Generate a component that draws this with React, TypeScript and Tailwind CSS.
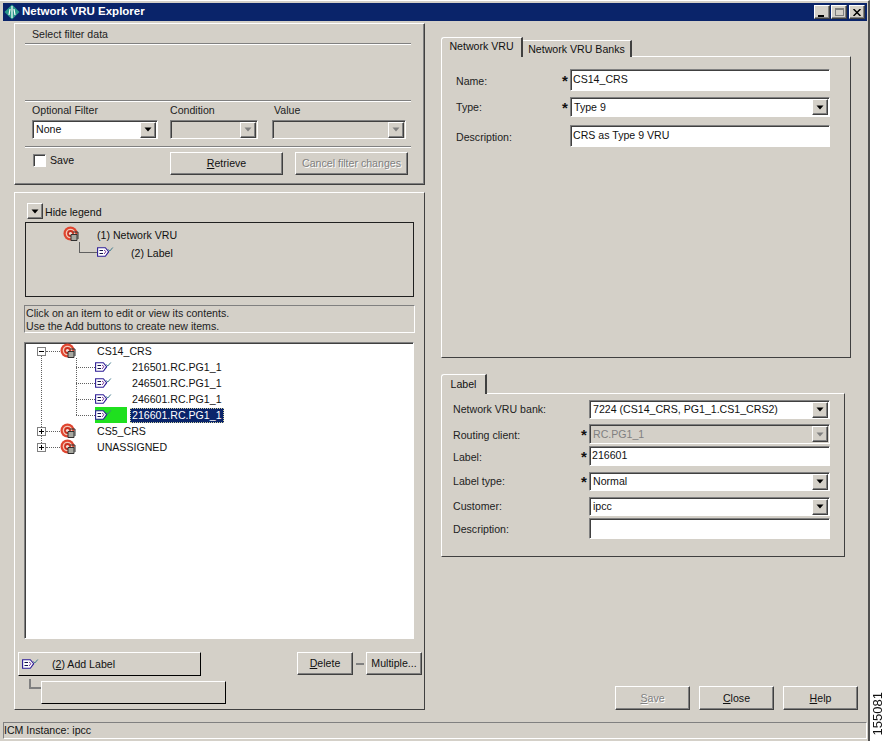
import type { ReactNode } from "react";

const raised = "border border-t-white border-l-white border-r-[#404040] border-b-[#404040] shadow-[inset_-1px_-1px_0_#808080]";
const sunken = "border border-t-[#808080] border-l-[#808080] border-r-white border-b-white shadow-[inset_1px_1px_0_#404040]";
const panel = "border border-t-white border-l-white border-r-[#404040] border-b-[#404040]";

function NetIcon() {
  return (
    <svg width="16" height="16" viewBox="0 0 16 16" className="shrink-0">
      <circle cx="7.5" cy="7.5" r="7" fill="#e0452f" />
      <circle cx="7.5" cy="7.5" r="4.8" fill="#f5c8b8" />
      <circle cx="7.5" cy="7.5" r="3.4" fill="#c9301f" />
      <circle cx="7.5" cy="7.5" r="1.6" fill="#f6e0d8" />
      <path d="M8 8.5h6v6H8z" fill="#a8a8a0" stroke="#303030" strokeWidth="1" />
      <path d="M10 6h5v7" fill="none" stroke="#303030" strokeWidth="1" />
    </svg>
  );
}

function LabelIcon() {
  return (
    <svg width="17" height="12" viewBox="0 0 17 12" className="shrink-0">
      <path d="M0.6 1.7h7.7l3.4 4-3.4 4.6H0.6z" fill="#fff" stroke="#2c1c96" strokeWidth="1.1" />
      <path d="M2.5 4.5h3.5M2.5 7.5h3.5" stroke="#14144c" strokeWidth="1" />
      <path d="M7 4l2 1.6L7 8" fill="none" stroke="#7a3a9a" strokeWidth="1" />
      <path d="M11.5 3.5l1.3 1.5 3-3.5" fill="none" stroke="#3f7a8c" strokeWidth="1" />
    </svg>
  );
}

function Arrow({ off }: { off?: boolean }) {
  return (
    <svg width="8" height="5" viewBox="0 0 8 5">
      <path d="M0.5 0.5h7L4 4.5z" fill={off ? "#808080" : "#000"} />
    </svg>
  );
}

function Etched({ className }: { className: string }) {
  return <div className={`h-[2px] ml-[10px] w-[386px] border-t border-t-[#808080] border-b border-b-white ${className}`} />;
}

function Select({ value, off, className }: { value?: string; off?: boolean; className: string }) {
  return (
    <div className={`${sunken} flex items-center justify-between pl-[3px] pr-[1px] ${off ? "bg-[#d4d0c8] text-[#808080]" : "bg-white"} ${className}`}>
      <span className="whitespace-nowrap">{value}</span>
      <span className={`${raised} bg-[#d4d0c8] w-[16px] h-[16px] flex items-center justify-center shrink-0`}>
        <Arrow off={off} />
      </span>
    </div>
  );
}

function Input({ value, className }: { value?: string; className: string }) {
  return <div className={`${sunken} bg-white flex items-center pl-[2px] pb-[2px] ${className}`}>{value}</div>;
}

function Btn({ children, off, className }: { children?: ReactNode; off?: boolean; className: string }) {
  return (
    <div className={`${raised} bg-[#d4d0c8] flex items-center justify-center shrink-0 ${off ? "text-[#808080] [text-shadow:1px_1px_0_#fff]" : ""} ${className}`}>
      {children}
    </div>
  );
}

function Field({ label, star, labelW, left, mt, children }: { label: string; star?: boolean; labelW: string; left: string; mt: string; children: ReactNode }) {
  return (
    <div className={`flex items-center ${mt}`}>
      <span className={`${left} ${labelW} text-[#222]`}>{label}</span>
      <span className="w-[8px] text-[15px] font-bold leading-none">{star ? "*" : ""}</span>
      {children}
    </div>
  );
}

function Hline({ w }: { w: string }) {
  return <span className={`${w} shrink-0 border-t border-dotted border-[#606060]`} />;
}

function Parent({ name, open }: { name: string; open?: boolean }) {
  return (
    <div className="flex items-center h-[16px] pl-[12px] relative">
      <span className="w-[9px] h-[9px] border border-[#808080] bg-white flex items-center justify-center relative shrink-0">
        <span className="w-[5px] h-px bg-black" />
        {!open && <span className="absolute w-px h-[5px] bg-black" />}
      </span>
      <Hline w="w-[14px]" />
      <span className="w-[37px] shrink-0"><NetIcon /></span>
      <span>{name}</span>
    </div>
  );
}

function Child({ name, selected }: { name: string; selected?: boolean }) {
  return (
    <div className="flex items-center h-[16px] pl-[51px]">
      <Hline w="w-[19px]" />
      <span className={`w-[32px] h-[16px] shrink-0 flex items-center ${selected ? "bg-[#1fe01f]" : ""}`}><LabelIcon /></span>
      {selected ? (
        <span className="ml-[3px] px-[2px] h-[15px] flex items-center bg-[#0a246a] text-white outline-1 outline-dotted outline-[#d0d0a0] -outline-offset-1">{name}</span>
      ) : (
        <span className="ml-[5px]">{name}</span>
      )}
    </div>
  );
}

function WinBtn({ children }: { children: ReactNode }) {
  return <span className={`${raised} bg-[#d4d0c8] w-[16px] h-[14px] flex items-center justify-center`}>{children}</span>;
}

export default function App() {
  return (
    <div className="w-[885px] h-[742px] flex bg-white overflow-hidden text-[10.6px] leading-none text-[#111] [font-family:'Liberation_Sans',sans-serif]">
      <div className="w-[870px] h-[741px] shrink-0 bg-[#d4d0c8] flex flex-col pl-[3px] pt-[3px] pr-px border-r-2 border-r-[#505050] border-t border-t-white">
        {/* title bar */}
        <div className="h-[18px] -mt-px shrink-0 bg-[#0a246a] flex items-center justify-between text-white font-bold text-[11.5px] pr-[2px]">
          <div className="flex items-center gap-[2px] pl-[1px]">
            <svg width="16" height="16" viewBox="0 0 16 16">
              <path d="M8 0.5L15.5 8 8 15.5 0.5 8z" fill="#2a9a8a" />
              <path d="M8 2v12M5 11l1-6M11 11l-1-6" stroke="#fff" strokeWidth="1.2" fill="none" />
            </svg>
            <span>Network VRU Explorer</span>
          </div>
          <div className="flex text-black">
            <WinBtn><span className="w-[6px] h-[2px] bg-black mt-[7px] -ml-[2px]" /></WinBtn>
            <span className="ml-[1px]"><WinBtn><span className="w-[9px] h-[8px] border border-t-2 border-[#808080]" /></WinBtn></span>
            <span className="ml-[2px]">
              <WinBtn>
                <svg width="8" height="7" viewBox="0 0 8 7"><path d="M0.5 0l7 7M7.5 0l-7 7" stroke="#000" strokeWidth="1.5" /></svg>
              </WinBtn>
            </span>
          </div>
        </div>

        <div className="flex flex-1 min-h-0">
          {/* left column */}
          <div className="ml-[11px] w-[411px] shrink-0">
            <div className={`${panel} mt-[2px] h-[162px] shadow-[inset_-1px_-1px_0_#808080]`}>
              <div className="mt-[3px] ml-[17px] h-[14px] flex items-center text-[#222]">Select filter data</div>
              <Etched className="mt-[2px]" />
              <Etched className="mt-[55px]" />
              <div className="flex mt-px h-[14px] items-center ml-[17px] text-[#222]">
                <span className="w-[138px]">Optional Filter</span>
                <span className="w-[104px]">Condition</span>
                <span>Value</span>
              </div>
              <div className="flex mt-[3px] ml-[17px] gap-[12px]">
                <Select value="None" className="w-[126px] h-[19px]" />
                <Select off className="w-[88px] h-[19px]" />
                <Select off className="w-[134px] h-[19px] ml-[2px]" />
              </div>
              <Etched className="mt-[7px]" />
              <div className="flex mt-[4px]">
                <div className="w-[155px] flex items-start pl-[18px] pt-[2px]">
                  <span className={`${sunken} w-[13px] h-[13px] bg-white`} />
                  <span className="ml-[4px] mt-px">Save</span>
                </div>
                <Btn className="w-[113px] h-[23px]"><span><u>R</u>etrieve</span></Btn>
                <Btn off className="w-[113px] h-[23px] ml-[12px]">Cancel filter changes</Btn>
              </div>
            </div>

            <div className={`${panel} mt-[7px] h-[518px] w-[411px]`}>
              <div className="flex mt-[10px] ml-[12px] h-[16px]">
                <Btn className="w-[16px] h-[16px]"><Arrow /></Btn>
                <span className="ml-[2px] mt-[4px]">Hide legend</span>
              </div>
              <div className="mt-[3px] ml-[10px] w-[389px] h-[75px] border border-[#202020]">
                <div className="flex items-center ml-[37px] mt-[3px] h-[16px]">
                  <NetIcon />
                  <span className="ml-[18px] mt-[2px]">(1) Network VRU</span>
                </div>
                <div className="flex ml-[53px] h-[18px] relative">
                  <span className="w-[18px] h-[11px] border-l border-b border-[#606060]" />
                  <span className="mt-[4px]"><LabelIcon /></span>
                  <span className="ml-[17px] mt-[6px]">(2) Label</span>
                </div>
              </div>
              <div className="mt-[8px] ml-[9px] w-[391px] h-[28px] border border-t-[#808080] border-l-[#808080] border-r-white border-b-white pl-px pt-px leading-[13px] text-[#222]">
                Click on an item to edit or view its contents.
                <br />
                Use the Add buttons to create new items.
              </div>
              <div className={`${sunken} relative mt-[9px] ml-[9px] w-[390px] h-[297px] bg-white`}>
                <span className="absolute left-[16px] top-[12px] h-[92px] border-l border-dotted border-[#606060]" />
                <span className="absolute left-[51px] top-[15px] h-[57px] border-l border-dotted border-[#606060]" />
                <Parent name="CS14_CRS" open />
                <Child name="216501.RC.PG1_1" />
                <Child name="246501.RC.PG1_1" />
                <Child name="246601.RC.PG1_1" />
                <Child name="216601.RC.PG1_1" selected />
                <Parent name="CS5_CRS" />
                <Parent name="UNASSIGNED" />
              </div>
              <div className="flex mt-[13px] ml-[3px] h-[24px] items-start">
                <div className="w-[183px] h-[24px] border border-t-white border-l-white border-r-black border-b-black flex items-center pl-[3px] shrink-0">
                  <LabelIcon />
                  <span className="ml-[13px]">(<u>2</u>) Add Label</span>
                </div>
                <Btn className="w-[56px] h-[23px] ml-[96px]"><span><u>D</u>elete</span></Btn>
                <span className="ml-[3px] mt-[11px] w-[8px] h-[2px] bg-[#808080]" />
                <Btn className="w-[56px] h-[23px] ml-[2px]">Multiple...</Btn>
              </div>
              <div className="flex mt-[5px] ml-[14px]">
                <span className="w-[12px] h-[10px] -mt-[2px] border-l-2 border-b-2 border-[#808080]" />
                <div className="w-[185px] h-[23px] border border-t-white border-l-white border-r-black border-b-black" />
              </div>
            </div>
          </div>

          {/* right column */}
          <div className="ml-[16px] flex-1 flex flex-col pr-[9px]">
            <div className="flex items-end mt-[16px] h-[20px] relative z-10 -mb-px">
              <div className="w-[82px] h-[20px] bg-[#d4d0c8] border-t border-l border-white border-r-2 border-r-[#404040] rounded-tl-[3px] flex items-center justify-center pb-[3px]">Network VRU</div>
              <div className="w-[109px] h-[17px] bg-[#d4d0c8] border-t border-t-white border-r-2 border-r-[#404040] flex items-center justify-center">Network VRU Banks</div>
            </div>
            <div className={`${panel} w-[410px] h-[302px]`}>
              <Field label="Name:" star left="ml-[14px] pt-[2px]" labelW="w-[106px]" mt="mt-[12px]">
                <Input value="CS14_CRS" className="w-[260px] h-[22px]" />
              </Field>
              <Field label="Type:" star left="ml-[14px]" labelW="w-[106px]" mt="mt-[6px]">
                <Select value="Type 9" className="w-[260px] h-[20px]" />
              </Field>
              <Field label="Description:" left="ml-[14px] pt-[2px]" labelW="w-[106px]" mt="mt-[8px]">
                <Input value="CRS as Type 9 VRU" className="w-[260px] h-[22px]" />
              </Field>
            </div>

            <div className="mt-[16px] h-[20px] relative z-10 -mb-px">
              <div className="w-[46px] h-[20px] bg-[#d4d0c8] border-t border-l border-white border-r-2 border-r-[#404040] rounded-tl-[3px] flex items-center justify-center">Label</div>
            </div>
            <div className={`${panel} w-[404px] h-[164px]`}>
              <Field label="Network VRU bank:" left="ml-[11px]" labelW="w-[128px]" mt="mt-[6px]">
                <Select value="7224 (CS14_CRS, PG1_1.CS1_CRS2)" className="w-[241px] h-[19px]" />
              </Field>
              <Field label="Routing client:" star left="ml-[11px] pt-[2px]" labelW="w-[128px]" mt="mt-[5px]">
                <Select off value="RC.PG1_1" className="w-[241px] h-[20px]" />
              </Field>
              <Field label="Label:" star left="ml-[11px] pt-[2px]" labelW="w-[128px]" mt="mt-[2px]">
                <Input value="216601" className="w-[241px] h-[20px]" />
              </Field>
              <Field label="Label type:" star left="ml-[11px]" labelW="w-[128px]" mt="mt-[6px]">
                <Select value="Normal" className="w-[241px] h-[19px]" />
              </Field>
              <Field label="Customer:" left="ml-[11px]" labelW="w-[128px]" mt="mt-[6px]">
                <Select value="ipcc" className="w-[241px] h-[19px]" />
              </Field>
              <Field label="Description:" left="ml-[11px] pt-[2px]" labelW="w-[128px]" mt="mt-[2px]">
                <Input className="w-[241px] h-[21px]" />
              </Field>
            </div>

            <div className="mt-auto mb-[12px] flex justify-end gap-[9px]">
              <Btn off className="w-[75px] h-[24px]"><span><u>S</u>ave</span></Btn>
              <Btn className="w-[75px] h-[24px]"><span><u>C</u>lose</span></Btn>
              <Btn className="w-[75px] h-[24px]"><span><u>H</u>elp</span></Btn>
            </div>
          </div>
        </div>

        {/* status bar */}
        <div className="h-[17px] mb-[2px] shrink-0 border border-t-[#808080] border-l-[#808080] border-r-white border-b-white flex items-center">ICM Instance: ipcc</div>
      </div>

      <div className="flex-1 flex items-end justify-center pb-[7px]">
        <span className="[writing-mode:vertical-rl] rotate-180 text-[13px]">155081</span>
      </div>
    </div>
  );
}
